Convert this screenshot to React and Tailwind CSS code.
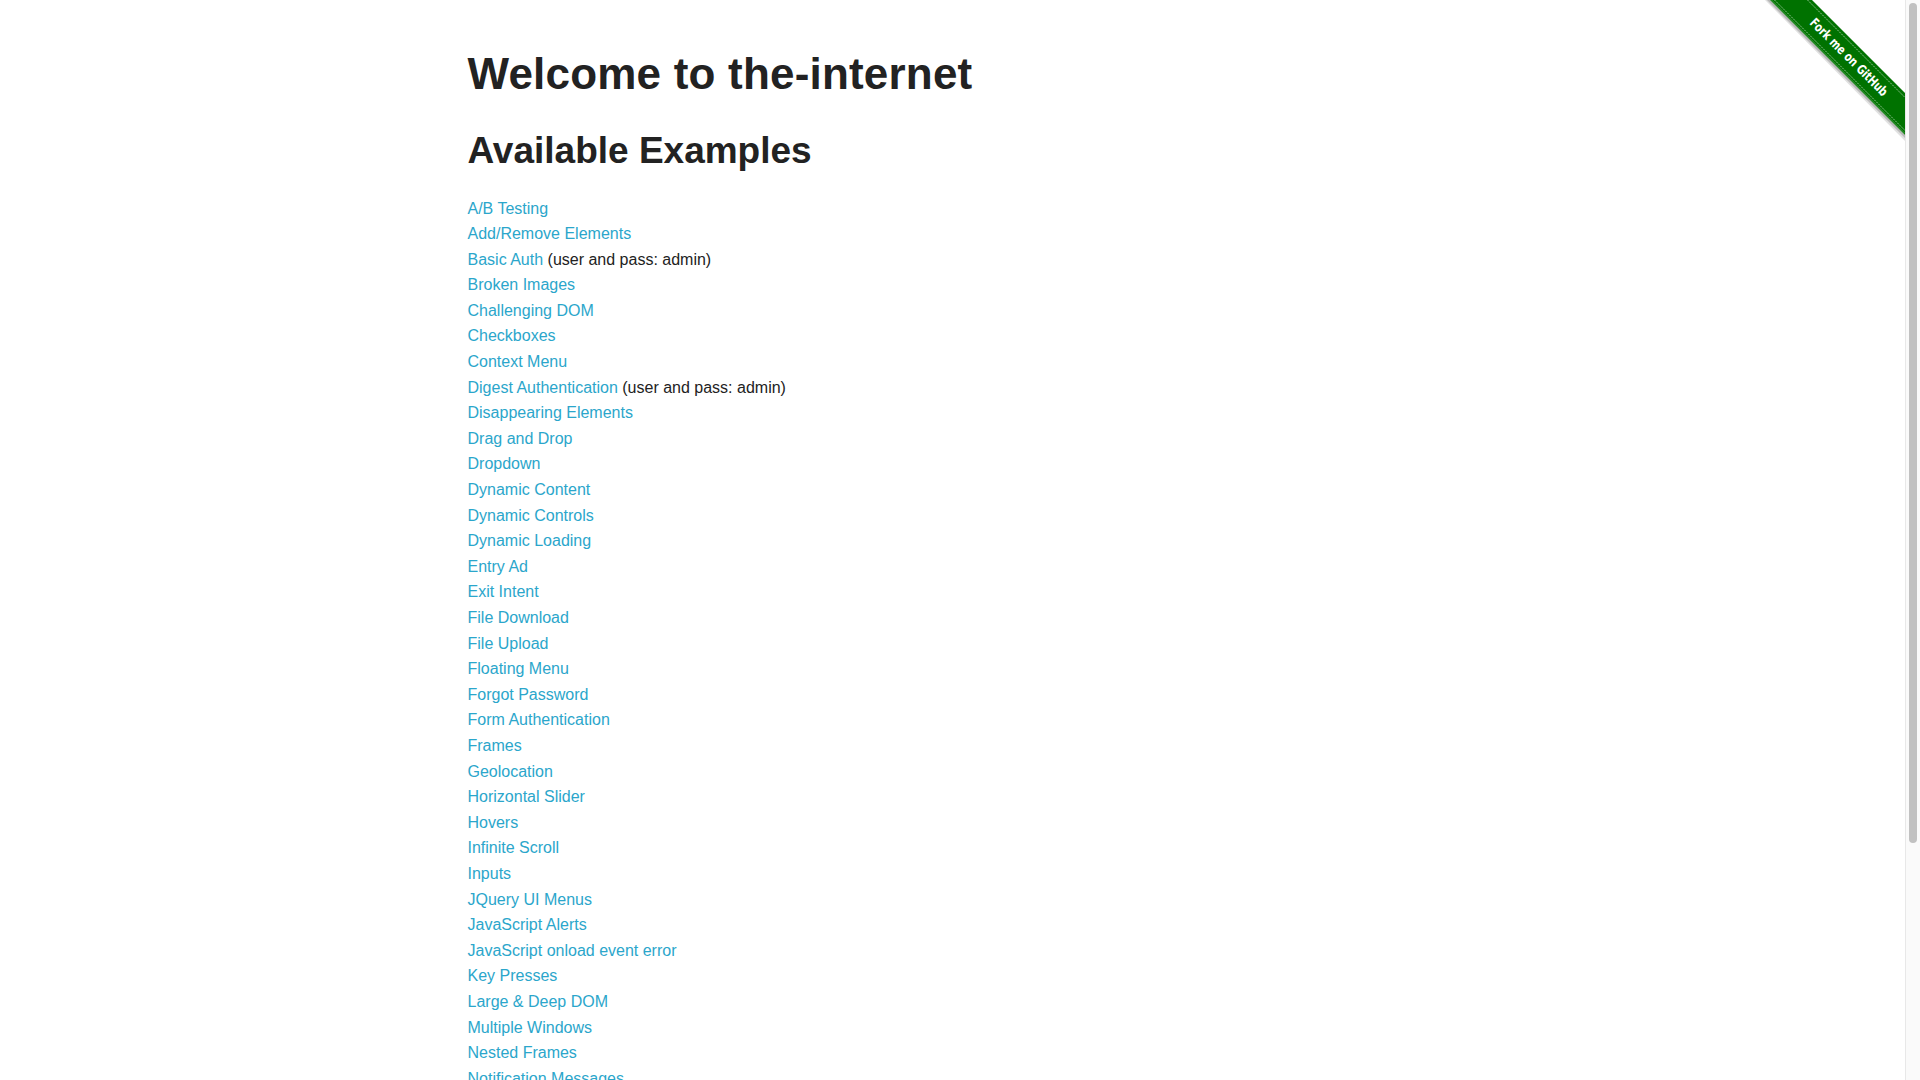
const examples = [
  ['A/B Testing'],
  ['Add/Remove Elements'],
  ['Basic Auth', '(user and pass: admin)'],
  ['Broken Images'],
  ['Challenging DOM'],
  ['Checkboxes'],
  ['Context Menu'],
  ['Digest Authentication', '(user and pass: admin)'],
  ['Disappearing Elements'],
  ['Drag and Drop'],
  ['Dropdown'],
  ['Dynamic Content'],
  ['Dynamic Controls'],
  ['Dynamic Loading'],
  ['Entry Ad'],
  ['Exit Intent'],
  ['File Download'],
  ['File Upload'],
  ['Floating Menu'],
  ['Forgot Password'],
  ['Form Authentication'],
  ['Frames'],
  ['Geolocation'],
  ['Horizontal Slider'],
  ['Hovers'],
  ['Infinite Scroll'],
  ['Inputs'],
  ['JQuery UI Menus'],
  ['JavaScript Alerts'],
  ['JavaScript onload event error'],
  ['Key Presses'],
  ['Large & Deep DOM'],
  ['Multiple Windows'],
  ['Nested Frames'],
  ['Notification Messages'],
  ['Redirect Link'],
  ['Secure File Download'],
  ['Shadow DOM'],
  ['Shifting Content'],
  ['Slow Resources'],
  ['Sortable Data Tables'],
  ['Status Codes'],
  ['Typos'],
  ['WYSIWYG Editor'],
];

function ForkRibbon() {
  return (
    <a href="#" className="absolute top-0 right-0 block h-[149px] w-[149px]">
      <svg width="149" height="149" viewBox="0 0 149 149">
        {/* soft shadow under the band */}
        <polygon points="9,0 14,0 149,135 149,141" fill="rgba(0,0,0,0.12)" />
        <polygon points="11,0 14,0 149,135 149,138" fill="rgba(0,0,0,0.18)" />
        <polygon points="14,0 56,0 149,93 149,135" fill="#007200" />
        <line x1="15.5" y1="0" x2="149" y2="133.5" stroke="#3f9a3f" strokeWidth="1" />
        <line x1="18.5" y1="0" x2="149" y2="130.5" stroke="rgba(255,255,255,0.55)" strokeWidth="1" strokeDasharray="2 1" />
        <line x1="51.5" y1="0" x2="149" y2="97.5" stroke="rgba(255,255,255,0.55)" strokeWidth="1" strokeDasharray="2 1" />
        <text
          x="93"
          y="57"
          transform="rotate(45 93 57)"
          textAnchor="middle"
          dominantBaseline="central"
          fill="#ffffff"
          fontSize="13"
          fontWeight="bold"
          fontFamily="'DejaVu Sans', 'Liberation Sans', sans-serif"
          textLength="104"
          lengthAdjust="spacingAndGlyphs"
        >
          Fork me on GitHub
        </text>
      </svg>
    </a>
  );
}

export default function App() {
  return (
    <div className="flex h-screen w-full overflow-hidden bg-white font-['Liberation_Sans',Arial,sans-serif] text-[#222222]">
      <div className="relative flex-1 overflow-hidden">
        <div className="mx-auto max-w-[1000px] px-[15px] pt-[46px]">
          <h1 className="text-[44px] leading-[55px] font-bold tracking-[0.2px] text-[#222222]">
            Welcome to the-internet
          </h1>
          <h2 className="mt-[26.5px] text-[37px] leading-[46px] font-bold text-[#222222]">
            Available Examples
          </h2>
          <ul className="mt-[22px]">
            {examples.map(([label, note]) => (
              <li key={label} className="text-[16px] leading-[25.6px]">
                <a href="#" className="text-[#2ba6cb]">
                  {label}
                </a>
                {note && <span className="text-[#222222]"> {note}</span>}
              </li>
            ))}
          </ul>
        </div>
        <ForkRibbon />
      </div>

      {/* scrollbar */}
      <div className="flex h-full w-[15px] shrink-0 flex-col border-l border-[#e8e8e8] bg-[#fafafa] px-[3px] pt-[3px]">
        <div className="h-[840px] w-full rounded-full bg-[#c1c1c1]" />
      </div>
    </div>
  );
}
